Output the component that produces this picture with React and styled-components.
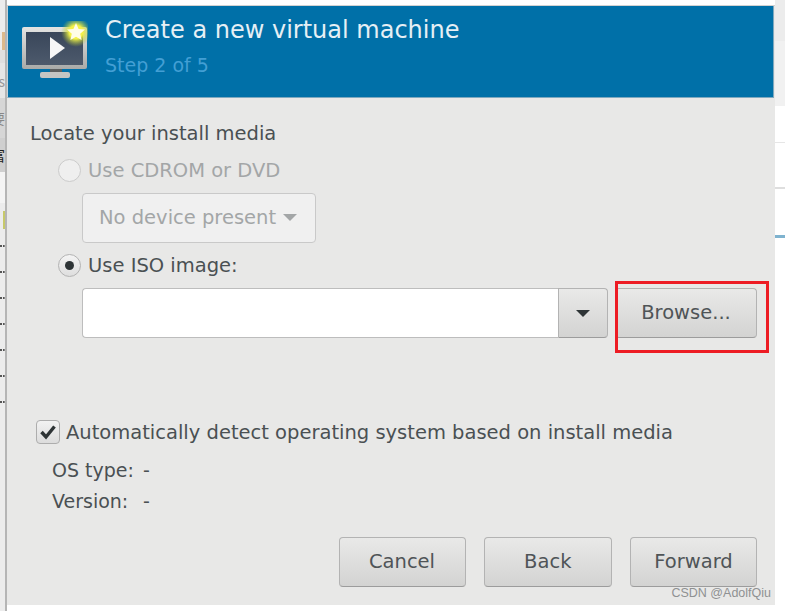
import React from 'react'
import styled, { createGlobalStyle } from 'styled-components'

const GlobalStyle = createGlobalStyle`
  html, body {
    margin: 0;
    padding: 0;
    background: #fff;
  }
  * {
    box-sizing: border-box;
  }
`

const Page = styled.div`
  position: relative;
  display: flex;
  width: 785px;
  height: 611px;
  overflow: hidden;
  background: #fff;
  font-family: "DejaVu Sans", sans-serif;
`

const LeftStrip = styled.div`
  flex: 0 0 7px;
  display: flex;
  flex-direction: column;
  height: 611px;
  overflow: hidden;
  background: #ececec;
  border-right: 2px solid #b5b5b5;
`

const StripPart = styled.div`
  display: flex;
  align-items: center;
  justify-content: flex-end;
  flex: 0 0 ${(p) => p.$h}px;
  overflow: hidden;
  background: ${(p) => p.$bg};
  color: ${(p) => p.$color || '#555'};
  font-family: "Noto Sans CJK SC", sans-serif;
  font-size: 14px;
  white-space: nowrap;
`

const StripBlock = styled.div`
  width: ${(p) => p.$w}px;
  height: ${(p) => p.$h}px;
  background: ${(p) => p.$bg};
`

const DottedRow = styled.div`
  flex: 0 0 ${(p) => p.$h}px;
  border-bottom: 2px dotted #555;
`

const Dialog = styled.div`
  flex: 0 0 768px;
  display: flex;
  flex-direction: column;
  height: 600px;
  margin-top: 5px;
  background: #e8e8e7;
  border-top: 1px solid #d2d2d2;
`

const Header = styled.header`
  flex: 0 0 92px;
  display: flex;
  align-items: flex-start;
  margin-right: 1px;
  padding: 10px 0 0 14px;
  background: #0070a8;
  border-bottom: 1px solid #7fa9bf;
  border-right: 1px solid #7fa9bf;
  border-left: 1px solid #c8d4da;
`

const IconSlot = styled.div`
  display: flex;
  margin-top: 5px;
`

const Titles = styled.div`
  margin-left: 17px;
`

const Title = styled.div`
  color: #e6eff5;
  font-size: 24px;
  line-height: 28px;
  white-space: nowrap;
`

const Step = styled.div`
  margin-top: 10px;
  color: #439fd4;
  font-size: 19px;
  line-height: 22px;
`

const Body = styled.main`
  display: flex;
  flex-direction: column;
  padding: 25px 18px 0 23px;
  color: #4a5053;
  font-size: 19.5px;
`

const Heading = styled.div`
  line-height: 22px;
`

const Options = styled.div`
  display: flex;
  flex-direction: column;
  margin-left: 28px;
`

const RadioRow = styled.div`
  display: flex;
  align-items: center;
  height: 24px;
  margin-top: ${(p) => p.$top}px;
  color: ${(p) => (p.$off ? '#a3a6a7' : 'inherit')};
`

const RadioDot = styled.span`
  flex: 0 0 23px;
  display: flex;
  align-items: center;
  justify-content: center;
  height: 23px;
  margin-right: 7px;
  border-radius: 50%;
  border: 1px solid ${(p) => (p.$off ? '#cbcbcb' : '#b3b3b3')};
  background: ${(p) => (p.$off ? '#efefef' : 'linear-gradient(#f4f4f4, #dedede)')};

  &::after {
    content: '';
    display: ${(p) => (p.$on ? 'block' : 'none')};
    width: 9px;
    height: 9px;
    border-radius: 50%;
    background: #2e3436;
  }
`

const Indented = styled.div`
  display: flex;
  margin: ${(p) => p.$top}px 0 0 24px;
`

const DeviceCombo = styled.div`
  display: flex;
  align-items: center;
  width: 234px;
  height: 50px;
  padding: 0 0 2px 16px;
  background: #f0f0f0;
  border: 1px solid #c9c9c9;
  border-radius: 4px;
  color: #a3a6a7;
  white-space: nowrap;
`

const Caret = styled.span`
  width: 0;
  height: 0;
  margin-left: ${(p) => p.$left || 0}px;
  border-left: 7px solid transparent;
  border-right: 7px solid transparent;
  border-top: 7px solid ${(p) => p.$color};
`

const Entry = styled.div`
  width: 476px;
  height: 50px;
  background: #fff;
  border: 1px solid #bdbdbd;
  border-right: none;
  border-radius: 4px 0 0 4px;
`

const ArrowButton = styled.div`
  display: flex;
  align-items: center;
  justify-content: center;
  width: 50px;
  height: 50px;
  margin-right: 7px;
  background: linear-gradient(#e9e9e8, #d3d3d2);
  border: 1px solid #b3b3b3;
  border-bottom-color: #9c9c9c;
  border-radius: 0 4px 4px 0;
`

const Button = styled.div`
  display: flex;
  align-items: center;
  justify-content: center;
  width: ${(p) => p.$w}px;
  height: 50px;
  padding-bottom: 2px;
  background: linear-gradient(#e9e9e8, #d3d3d2);
  border: 1px solid #b3b3b3;
  border-bottom-color: #9c9c9c;
  border-radius: 4px;
  color: #4f5457;
`

const CheckRow = styled.div`
  display: flex;
  align-items: center;
  height: 24px;
  margin: 82px 0 0 6px;
  white-space: nowrap;
`

const CheckBox = styled.span`
  flex: 0 0 24px;
  display: flex;
  align-items: center;
  justify-content: center;
  height: 24px;
  margin-right: 6px;
  background: linear-gradient(#f2f2f2, #dcdcdc);
  border: 1px solid #adadad;
  border-radius: 4px;
`

const Info = styled.div`
  display: grid;
  grid-template-columns: 91px auto;
  grid-auto-rows: 31px;
  align-items: center;
  margin: 10px 0 0 22px;
  font-size: 19px;
`

const Footer = styled.div`
  display: flex;
  justify-content: flex-end;
  gap: 18.5px;
  margin-top: 21px;
`

const RightStrip = styled.div`
  flex: 0 0 10px;
  display: flex;
  flex-direction: column;
  background: #fff;
`

const Highlight = styled.div`
  position: absolute;
  left: 615px;
  top: 281px;
  width: 154px;
  height: 72px;
  border: 3px solid #ed1c24;
`

const Watermark = styled.div`
  position: absolute;
  right: 14px;
  top: 586px;
  color: #8f9192;
  font-family: "Liberation Sans", sans-serif;
  font-size: 12.5px;
  line-height: 15px;
`

const MachineIcon = () => (
  <svg width="66" height="60" viewBox="0 0 66 60">
    <defs>
      <radialGradient id="glow">
        <stop offset="0.45" stopColor="#f4f24a" />
        <stop offset="1" stopColor="#9fb93a" stopOpacity="0" />
      </radialGradient>
      <linearGradient id="screen" x1="0" y1="0" x2="0" y2="1">
        <stop offset="0" stopColor="#39465a" />
        <stop offset="1" stopColor="#4d5a6c" />
      </linearGradient>
      <linearGradient id="frame" x1="0" y1="0" x2="0" y2="1">
        <stop offset="0" stopColor="#e4e4e2" />
        <stop offset="1" stopColor="#a9aaa8" />
      </linearGradient>
    </defs>
    <rect x="0" y="6" width="65" height="42" rx="2" fill="url(#frame)" />
    <rect x="4" y="11" width="57" height="33" fill="url(#screen)" />
    <path d="M28 48h12v4h-12z" fill="#5d5f5f" />
    <rect x="18" y="51" width="30" height="6" rx="2" fill="#c4c5c3" />
    <path d="M28 16 L43 27 L28 38 Z" fill="#f6f6f6" />
    <circle cx="54" cy="11" r="15" fill="url(#glow)" />
    <path d="M54 2 L56.6 8 L63 8.6 L58.2 12.8 L59.6 19 L54 15.8 L48.4 19 L49.8 12.8 L45 8.6 L51.4 8 Z" fill="#fffde8" />
  </svg>
)

const CheckMark = () => (
  <svg width="18" height="16" viewBox="0 0 18 16">
    <path d="M2.5 8 L7 13 L15.5 2.5" fill="none" stroke="#2e3436" strokeWidth="3.4" />
  </svg>
)

const App = () => (
  <Page>
    <GlobalStyle />
    <LeftStrip>
      <StripPart $h={32} $bg="#ececec" />
      <StripPart $h={18} $bg="#ececec">
        <StripBlock $w={3} $h={18} $bg="#dcb98c" />
      </StripPart>
      <StripPart $h={13} $bg="#dfdfdf" />
      <StripPart $h={35} $bg="#e6e6e6" $color="#999">ss</StripPart>
      <StripPart $h={40} $bg="#d6d6d6" $color="#888">要</StripPart>
      <StripPart $h={34} $bg="#cfcfcf" $color="#222">富</StripPart>
      <StripPart $h={31} $bg="#f4f4f4" />
      <StripPart $h={8} $bg="#ececec" />
      <StripPart $h={18} $bg="#ececec">
        <StripBlock $w={2} $h={18} $bg="#c7c96a" />
      </StripPart>
      {[18, 26, 26, 26, 26, 26, 26].map((h, i) => (
        <DottedRow key={i} $h={h} />
      ))}
    </LeftStrip>
    <Dialog>
      <Header>
        <IconSlot>
          <MachineIcon />
        </IconSlot>
        <Titles>
          <Title>Create a new virtual machine</Title>
          <Step>Step 2 of 5</Step>
        </Titles>
      </Header>
      <Body>
        <Heading>Locate your install media</Heading>
        <Options>
          <RadioRow $off $top={13}>
            <RadioDot $off />
            Use CDROM or DVD
          </RadioRow>
          <Indented $top={11}>
            <DeviceCombo>
              No device present
              <Caret $left={7} $color="#a3a6a7" />
            </DeviceCombo>
          </Indented>
          <RadioRow $top={10}>
            <RadioDot $on />
            Use ISO image:
          </RadioRow>
          <Indented $top={11}>
            <Entry />
            <ArrowButton>
              <Caret $color="#2e3436" />
            </ArrowButton>
            <Button $w={142}>Browse...</Button>
          </Indented>
        </Options>
        <CheckRow>
          <CheckBox>
            <CheckMark />
          </CheckBox>
          Automatically detect operating system based on install media
        </CheckRow>
        <Info>
          <span>OS type:</span>
          <span>-</span>
          <span>Version:</span>
          <span>-</span>
        </Info>
        <Footer>
          <Button $w={127}>Cancel</Button>
          <Button $w={127.5}>Back</Button>
          <Button $w={127}>Forward</Button>
        </Footer>
      </Body>
    </Dialog>
    <RightStrip>
      <StripPart $h={41} $bg="#ececec" />
      <StripPart $h={65} $bg="#f1f1f1" />
      <StripPart $h={36} $bg="#fff" />
      <StripPart $h={1} $bg="#e6e6e6" />
      <StripPart $h={44} $bg="#fff" />
      <StripPart $h={2} $bg="#dedede" />
      <StripPart $h={46} $bg="#fff" />
      <StripPart $h={3} $bg="#7fb3cf" />
    </RightStrip>
    <Highlight />
    <Watermark>CSDN @AdolfQiu</Watermark>
  </Page>
)

export default App
